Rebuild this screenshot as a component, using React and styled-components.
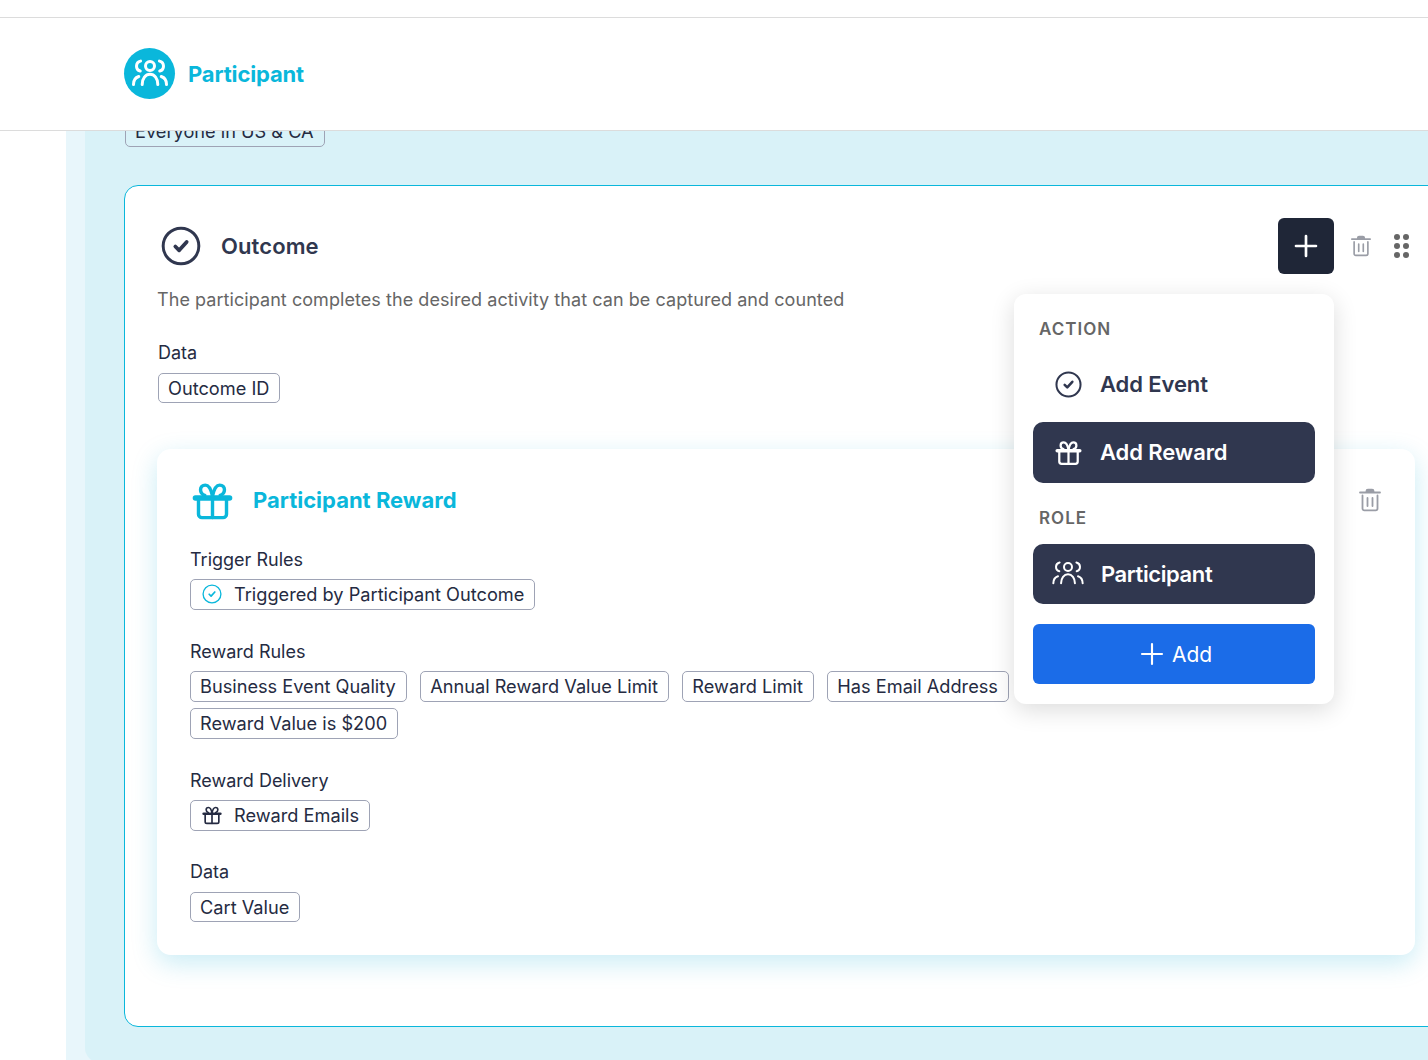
import React from 'react'
import styled, { createGlobalStyle } from 'styled-components'

const CYAN = '#0ab7db'
const NAVY = '#30374f'
const INK = '#252b42'

const GlobalStyle = createGlobalStyle`
  html, body {
    margin: 0;
    height: 100%;
    overflow: hidden;
    background: #fff;
    font-family: Inter, "Liberation Sans", sans-serif;
    color: ${INK};
  }
  * { box-sizing: border-box; }
`

const Svg = ({ size, width = 2, children }) => (
  <svg
    width={size}
    height={size}
    viewBox='0 0 24 24'
    fill='none'
    stroke='currentColor'
    strokeWidth={width}
    strokeLinecap='round'
    strokeLinejoin='round'
  >
    {children}
  </svg>
)

const PeopleIcon = ({ size, width }) => (
  <Svg size={size} width={width}>
    <circle cx='12' cy='6.700' r='3' />
    <path d='M6.800 19c0-4 2.200-6.800 5.200-6.800s5.200 2.800 5.200 6.800' />
    <path d='M5.700 3.400a3.400 3.400 0 0 0-.2 6.600' />
    <path d='M18.300 3.400a3.400 3.400 0 0 1 .2 6.600' />
    <path d='M1 19c0-2.700 1.300-4.600 3.500-5.300' />
    <path d='M23 19c0-2.700-1.300-4.600-3.500-5.300' />
  </Svg>
)

const GiftIcon = ({ size, width }) => (
  <Svg size={size} width={width}>
    <path d='M2 10.500h20' strokeWidth={width * 1.600} />
    <path d='M3.800 11v9a2 2 0 0 0 2 2h12.400a2 2 0 0 0 2-2v-9' />
    <path d='M12 10v12' />
    <path d='M12 9.500C11.200 5.500 9.800 3 7.800 3 6 3 5 4.300 5 5.700c0 1.600 1 2.800 2.500 3.300' />
    <path d='M12 9.500c.8-4 2.200-6.500 4.200-6.500C18 3 19 4.300 19 5.700c0 1.600-1 2.800-2.500 3.300' />
  </Svg>
)

const CheckCircleIcon = ({ size, width }) => (
  <Svg size={size} width={width}>
    <circle cx='12' cy='12' r='10.700' />
    <path d='M8.600 12.300l2.300 2.300 4.500-5' strokeWidth={width * 1.250} />
  </Svg>
)

const PlusIcon = ({ size, width }) => (
  <Svg size={size} width={width}>
    <path d='M12 4.500v15M4.500 12h15' />
  </Svg>
)

const TrashIcon = ({ size }) => (
  <Svg size={size} width={1.800}>
    <path d='M2 4.500h20' />
    <path d='M8.500 4V3c0-.8.600-1.300 1.400-1.300h4.200c.8 0 1.400.5 1.400 1.300v1Z' fill='currentColor' />
    <path d='M4.500 7.500v13a1.800 1.800 0 0 0 1.800 1.800h11.400a1.800 1.800 0 0 0 1.800-1.800v-13' />
    <path d='M9.500 10v8M14.500 10v8' />
  </Svg>
)

const Page = styled.div`
  height: 1060px;
  display: flex;
  flex-direction: column;
  overflow: hidden;
`

const TopStrip = styled.div`
  flex: none;
  height: 18px;
  border-bottom: 1px solid #dcdcdc;
`

const Header = styled.header`
  flex: none;
  position: relative;
  z-index: 2;
  height: 113px;
  padding: 0 0 1px 124px;
  display: flex;
  align-items: center;
  gap: 13px;
  background: #fff;
  border-bottom: 1px solid #dcdcdc;
`

const Avatar = styled.div`
  width: 51px;
  height: 51px;
  border-radius: 50%;
  background: ${CYAN};
  color: #fff;
  display: flex;
  align-items: center;
  justify-content: center;
`

const HeaderTitle = styled.h1`
  margin: 0;
  font-size: 22px;
  line-height: 28px;
  font-weight: 700;
  letter-spacing: -0.15px;
  color: ${CYAN};
`

const Shell = styled.div`
  flex: 1;
  min-height: 0;
  margin-left: 66px;
  padding-left: 19px;
  background: #e8f6fb;
`

const Panel = styled.main`
  display: flow-root;
  height: calc(100% + 2px);
  padding-left: 39px;
  background: #d9f2f8;
  border-bottom-left-radius: 14px;
`

const ClippedTag = styled.div`
  margin: -15px 0 38px 1px;
`

const Tag = styled.span`
  display: inline-flex;
  align-items: center;
  gap: ${p => (p.$icon ? '12px' : '0')};
  height: ${p => p.$height || 31}px;
  padding: 0 10px ${p => (p.$height ? 0 : 1)}px ${p => (p.$icon ? '11px' : '9px')};
  border: 1px solid #9ea3b5;
  border-radius: 5px;
  font-size: 18.2px;
  line-height: 24px;
  white-space: nowrap;
  color: ${INK};
`

const TagIcon = styled.span`
  display: flex;
  color: ${p => (p.$cyan ? CYAN : INK)};
`

const OutcomeCard = styled.section`
  width: 1344px;
  height: 842px;
  padding: 32px 52px 0 32px;
  background: #fff;
  border: 1px solid ${CYAN};
  border-radius: 14px;
`

const CardHead = styled.div`
  display: flex;
  align-items: center;
  justify-content: space-between;
  padding: 0 6px 0 4px;
`

const CardTitleRow = styled.div`
  display: flex;
  align-items: center;
  gap: 20px;
  color: ${NAVY};
`

const CardTitle = styled.h2`
  margin: 0;
  font-size: 22px;
  line-height: 28px;
  font-weight: 600;
  letter-spacing: 0.1px;
  color: ${NAVY};
`

const Actions = styled.div`
  display: flex;
  align-items: center;
`

const AddWrap = styled.div`
  position: relative;
  margin-right: 16px;
`

const AddButton = styled.button`
  width: 56px;
  height: 56px;
  padding: 0;
  border: 0;
  border-radius: 6px;
  background: #1f2637;
  color: #fff;
  display: flex;
  align-items: center;
  justify-content: center;
`

const TrashButton = styled.span`
  display: flex;
  color: #9a9da6;
`

const Dots = styled.span`
  display: grid;
  grid-template-columns: 6px 6px;
  gap: 3px;
  margin-left: 22px;

  i {
    width: 6px;
    height: 6px;
    border-radius: 50%;
    background: #666;
  }
`

const Description = styled.p`
  margin: 13px 0 0;
  font-size: 18px;
  line-height: 26px;
  letter-spacing: 0.06px;
  color: #666;
`

const DataBlock = styled.div`
  margin: 28px 0 0 1px;
`

const Label = styled.div`
  font-size: 18px;
  line-height: 24px;
  margin-bottom: ${p => p.$gap || 7}px;
  color: ${INK};
`

const RewardCard = styled.div`
  margin-top: 46px;
  height: 506px;
  padding: 29px 33px 0 33px;
  background: #fff;
  border-radius: 14px;
  box-shadow: 0 8px 26px rgba(10, 170, 210, 0.22);
`

const RewardHead = styled.div`
  display: flex;
  align-items: center;
  justify-content: space-between;
  height: 44px;
`

const RewardTitleRow = styled.div`
  display: flex;
  align-items: center;
  gap: 20px;
  padding-left: 2px;
  color: ${CYAN};
`

const RewardTitle = styled.h3`
  margin: 0;
  font-size: 22px;
  line-height: 28px;
  font-weight: 700;
  color: ${CYAN};
`

const Section = styled.div`
  margin-top: ${p => p.$top}px;
`

const TagRow = styled.div`
  display: flex;
  flex-wrap: wrap;
  gap: 6px 13.400px;
  max-width: 860px;
`

const Popup = styled.div`
  position: absolute;
  z-index: 3;
  top: 76px;
  right: 0;
  width: 320px;
  height: 410px;
  padding: 23px 19px 0;
  background: #fff;
  border-radius: 12px;
  box-shadow: 0 6px 24px rgba(0, 0, 0, 0.14);
`

const GroupLabel = styled.div`
  padding-left: 6px;
  margin-top: ${p => p.$top || 0}px;
  font-size: 17px;
  line-height: 24px;
  font-weight: 600;
  letter-spacing: 1px;
  color: #666;
`

const MenuItem = styled.div`
  display: flex;
  align-items: center;
  gap: ${p => p.$gap || 18}px;
  height: ${p => p.$height || 60}px;
  margin-top: ${p => p.$top || 0}px;
  padding: 0 0 ${p => (p.$height ? 1 : 0)}px ${p => p.$pad || 22}px;
  border-radius: 10px;
  font-size: 22px;
  font-weight: 600;
  letter-spacing: ${p => (p.$tight ? '-0.4px' : '-0.1px')};
  background: ${p => (p.$active ? NAVY : 'transparent')};
  color: ${p => (p.$active ? '#fff' : NAVY)};
`

const SubmitButton = styled.button`
  width: 100%;
  height: 60px;
  margin-top: 20px;
  border: 0;
  border-radius: 6px;
  background: #1b6ce8;
  color: #fff;
  display: flex;
  align-items: center;
  justify-content: center;
  gap: 4px;
  font-family: inherit;
  font-size: 21px;
`

export default function App() {
  return (
    <Page>
      <GlobalStyle />
      <TopStrip />
      <Header>
        <Avatar><PeopleIcon size={36} width={2} /></Avatar>
        <HeaderTitle>Participant</HeaderTitle>
      </Header>
      <Shell>
        <Panel>
          <ClippedTag><Tag>Everyone in US &amp; CA</Tag></ClippedTag>
          <OutcomeCard>
            <CardHead>
              <CardTitleRow>
                <CheckCircleIcon size={40} width={1.800} />
                <CardTitle>Outcome</CardTitle>
              </CardTitleRow>
              <Actions>
                <AddWrap>
                  <AddButton><PlusIcon size={32} width={2} /></AddButton>
                  <Popup>
                    <GroupLabel>ACTION</GroupLabel>
                    <MenuItem $height={61} $top={13}>
                      <CheckCircleIcon size={27} width={1.800} />
                      Add Event
                    </MenuItem>
                    <MenuItem $active $height={61} $top={7}>
                      <GiftIcon size={27} width={2} />
                      Add Reward
                    </MenuItem>
                    <GroupLabel $top={23}>ROLE</GroupLabel>
                    <MenuItem $active $tight $top={14} $pad={19} $gap={17}>
                      <PeopleIcon size={32} width={1.500} />
                      Participant
                    </MenuItem>
                    <SubmitButton>
                      <PlusIcon size={32} width={1.600} />
                      Add
                    </SubmitButton>
                  </Popup>
                </AddWrap>
                <TrashButton><TrashIcon size={22} /></TrashButton>
                <Dots><i /><i /><i /><i /><i /><i /></Dots>
              </Actions>
            </CardHead>
            <Description>
              The participant completes the desired activity that can be captured and counted
            </Description>
            <DataBlock>
              <Label $gap={8}>Data</Label>
              <Tag $height={30}>Outcome ID</Tag>
            </DataBlock>
            <RewardCard>
              <RewardHead>
                <RewardTitleRow>
                  <GiftIcon size={41} width={2} />
                  <RewardTitle>Participant Reward</RewardTitle>
                </RewardTitleRow>
                <TrashButton><TrashIcon size={24} /></TrashButton>
              </RewardHead>
              <Section $top={26}>
                <Label>Trigger Rules</Label>
                <Tag $icon>
                  <TagIcon $cyan><CheckCircleIcon size={20} width={1.600} /></TagIcon>
                  Triggered by Participant Outcome
                </Tag>
              </Section>
              <Section $top={30}>
                <Label>Reward Rules</Label>
                <TagRow>
                  <Tag>Business Event Quality</Tag>
                  <Tag>Annual Reward Value Limit</Tag>
                  <Tag>Reward Limit</Tag>
                  <Tag>Has Email Address</Tag>
                  <Tag>Reward Value is $200</Tag>
                </TagRow>
              </Section>
              <Section $top={30}>
                <Label>Reward Delivery</Label>
                <Tag $icon>
                  <TagIcon><GiftIcon size={20} width={2} /></TagIcon>
                  Reward Emails
                </Tag>
              </Section>
              <Section $top={29}>
                <Label $gap={8}>Data</Label>
                <Tag $height={30}>Cart Value</Tag>
              </Section>
            </RewardCard>
          </OutcomeCard>
        </Panel>
      </Shell>
    </Page>
  )
}
